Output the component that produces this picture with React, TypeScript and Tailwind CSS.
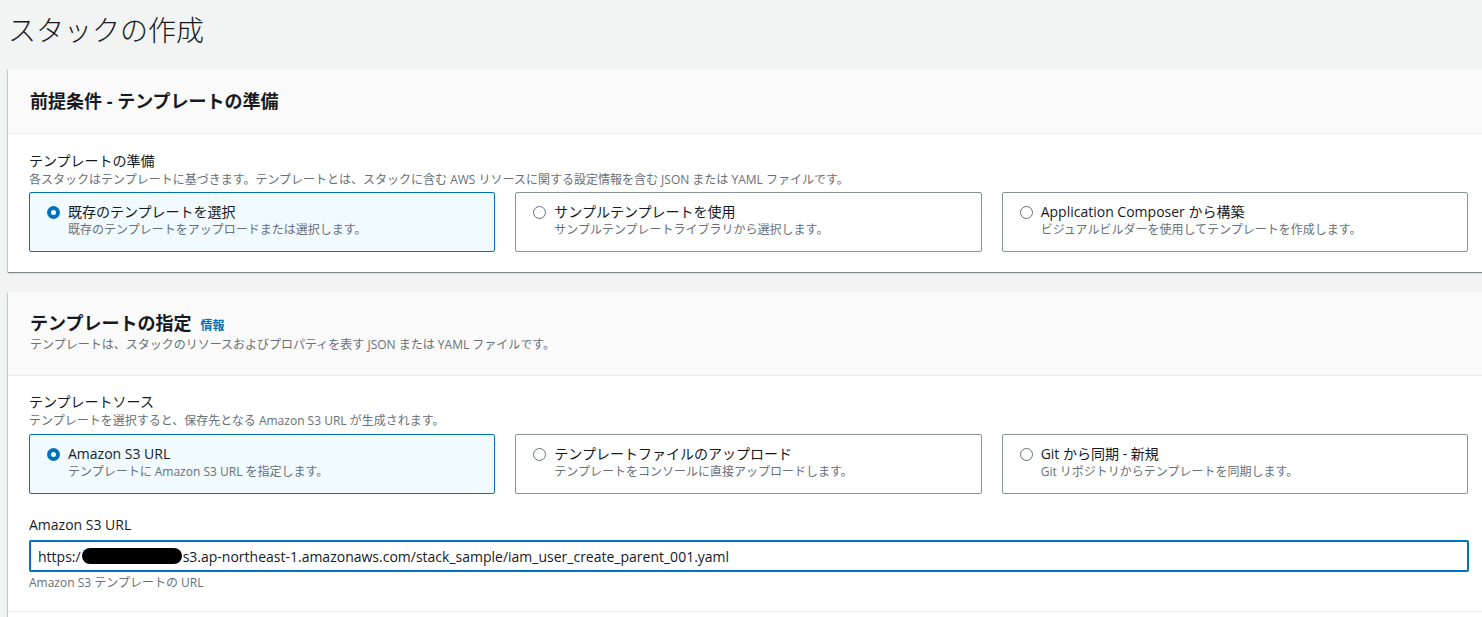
import { ReactNode } from "react"

const font = "font-['Open_Sans','Noto_Sans_CJK_JP',sans-serif]"

type TileProps = {
  title: string
  desc: string
  selected?: boolean
}

function Radio({ selected }: { selected?: boolean }) {
  return selected ? (
    <span className="mt-[4px] block h-[13px] w-[13px] shrink-0 rounded-full border-[4px] border-[#0073bb] bg-white" />
  ) : (
    <span className="mt-[4px] block h-[13px] w-[13px] shrink-0 rounded-full border-[1.5px] border-[#687078] bg-white" />
  )
}

function Tile({ title, desc, selected }: TileProps) {
  return (
    <div
      className={`flex h-[60px] gap-[8px] rounded-[2px] border pl-[17px] pt-[9px] ${
        selected ? "border-[#0073bb] bg-[#f1faff]" : "border-[#879596] bg-white"
      }`}
    >
      <Radio selected={selected} />
      <div className="flex flex-col">
        <span className="text-[14px] leading-[20px] text-[#16191f]">{title}</span>
        <span className="text-[12px] leading-[16px] text-[#687078]">{desc}</span>
      </div>
    </div>
  )
}

function Card({ header, children }: { header: ReactNode; children: ReactNode }) {
  return (
    <div className="w-[1480px] bg-white shadow-[0_1px_1px_0_rgba(0,28,36,0.3),1px_1px_1px_0_rgba(0,28,36,0.15),-1px_1px_1px_0_rgba(0,28,36,0.15)]">
      <div className="border-b border-[#eaeded] bg-[#fafafa] pl-[22px]">{header}</div>
      {children}
    </div>
  )
}

export default function App() {
  return (
    <div className={`h-[617px] w-[1482px] overflow-hidden bg-[#f2f3f3] pl-2 text-[#16191f] ${font}`}>
      {/* page title */}
      <h1 className="pt-[12px] text-[28px] font-light leading-[36px] text-[#16191f]">スタックの作成</h1>

      <div className="mt-[21px] flex flex-col gap-[20px]">
        {/* 前提条件 */}
        <Card
          header={
            <div className="flex h-[64px] items-center">
              <h2 className="text-[18px] font-bold leading-[24px]">前提条件 - テンプレートの準備</h2>
            </div>
          }
        >
          <div className="pl-[21px] pr-[20px] pb-[20px] pt-[16px]">
            <div className="text-[14px] leading-[22px]">テンプレートの準備</div>
            <div className="text-[12px] leading-[16px] text-[#687078]">
              各スタックはテンプレートに基づきます。テンプレートとは、スタックに含む AWS リソースに関する設定情報を含む JSON または YAML ファイルです。
            </div>
            <div className="mt-[4px] grid grid-cols-3 gap-[20px]">
              <Tile selected title="既存のテンプレートを選択" desc="既存のテンプレートをアップロードまたは選択します。" />
              <Tile title="サンプルテンプレートを使用" desc="サンプルテンプレートライブラリから選択します。" />
              <Tile title="Application Composer から構築" desc="ビジュアルビルダーを使用してテンプレートを作成します。" />
            </div>
          </div>
        </Card>

        {/* テンプレートの指定 */}
        <Card
          header={
            <div className="pb-[22px] pt-[19px]">
              <div className="flex items-baseline gap-[9px]">
                <h2 className="text-[18px] font-bold leading-[24px]">テンプレートの指定</h2>
                <a className="text-[12px] font-bold text-[#0073bb]">情報</a>
              </div>
              <div className="mt-[2px] text-[12px] leading-[16px] text-[#687078]">
                テンプレートは、スタックのリソースおよびプロパティを表す JSON または YAML ファイルです。
              </div>
            </div>
          }
        >
          <div className="border-b border-[#eaeded] pl-[21px] pr-[19px] pb-[20px] pt-[15px]">
            <div className="text-[14px] leading-[22px]">テンプレートソース</div>
            <div className="text-[12px] leading-[16px] text-[#687078]">
              テンプレートを選択すると、保存先となる Amazon S3 URL が生成されます。
            </div>
            <div className="mr-[1px] mt-[5px] grid grid-cols-3 gap-[20px]">
              <Tile selected title="Amazon S3 URL" desc="テンプレートに Amazon S3 URL を指定します。" />
              <Tile title="テンプレートファイルのアップロード" desc="テンプレートをコンソールに直接アップロードします。" />
              <Tile title="Git から同期 - 新規" desc="Git リポジトリからテンプレートを同期します。" />
            </div>

            <div className="mt-[20px] text-[14px] leading-[22px]">Amazon S3 URL</div>
            <div className="mt-[4px] flex h-[32px] items-center rounded-[2px] border-2 border-[#0073bb] pl-[7px] text-[14px]">
              <span>https:/</span>
              <span className="mx-[1px] inline-block h-[16px] w-[100px] rounded-full bg-black" />
              <span>s3.ap-northeast-1.amazonaws.com/stack_sample/iam_user_create_parent_001.yaml</span>
            </div>
            <div className="mt-[3px] text-[12px] leading-[16px] text-[#687078]">Amazon S3 テンプレートの URL</div>
          </div>
          <div className="h-[40px]" />
        </Card>
      </div>
    </div>
  )
}
